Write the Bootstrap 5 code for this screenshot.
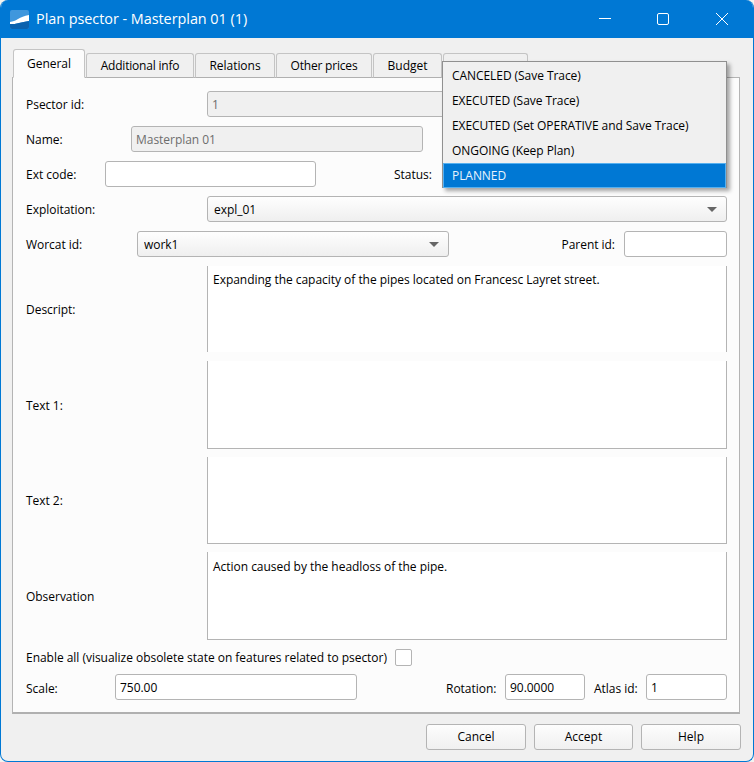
<!DOCTYPE html>
<html lang="en">
<head>
    <meta charset="UTF-8">
    <title>Plan psector - Masterplan 01 (1)</title>
    <link href="https://cdn.jsdelivr.net/npm/bootstrap@5.3.0/dist/css/bootstrap.min.css" rel="stylesheet">
    <style>
        html, body { height: 100%; }
        body { background: #f4f4f0; font-family: "Open Sans", "Liberation Sans", sans-serif; font-size: 12px; letter-spacing: -.03px; color: #000; overflow: hidden; }
        .win { width: 754px; height: 762px; background: #f0f0f0; border: 1px solid #0078d4; border-top: 0; border-radius: 8px; overflow: hidden; }
        .win-title { height: 38px; background: #0078d4; color: #fff; font-size: 14.4px; padding-left: 9px; }
        .win-title svg { display: block; }
        .win-ctl { height: 38px; }
        .ctl-min { width: 58px; }
        .ctl-max { width: 58px; }
        .ctl-close { width: 60px; }
        .win-ctls { padding-right: 1px; }
        .win-name { margin-left: 7px; }

        .tabs-wrap { margin: 11px 13px 0 11px; position: relative; }
        .nav-tabs.qt-tabs { border-bottom: 0; margin-left: 1px; gap: 1px; align-items: flex-end; position: relative; z-index: 1; margin-bottom: -1px; }
        .qt-tabs .nav-link { height: 25px; margin: 0; padding: 0; border: 1px solid #c4c4c4; border-bottom: 1px solid #b0b0b0; border-radius: 3px 3px 0 0; background: #f0f0f0; color: #000; display: flex; align-items: center; justify-content: center; }
        .qt-tabs .nav-link.active { height: 29px; padding-top: 1px; background: #fcfcfc; color: #000; border-color: #c4c4c4 #c4c4c4 #fcfcfc; }
        .tab-gen { width: 72px; }
        .qt-tabs .tab-add { width: 108px; letter-spacing: -.2px; }
        .tab-rel { width: 80px; }
        .qt-tabs .tab-pri { width: 96px; letter-spacing: -.2px; }
        .tab-bud { width: 69px; }
        .tab-hid { width: 85px; }

        .pane { height: 637px; background: #fcfcfc; border: 1px solid #b4b4b4; border-bottom: 2px solid #b0b0b0; padding: 13px 12px 0 13px; gap: 8px; }
        .fld-row { height: 27px; }
        .fld-row .form-control, .fld-row .form-select { height: 26px; align-self: flex-start; font-size: 12px; letter-spacing: -.03px; color: #000; border: 1px solid #b4b4b4; border-radius: 3px; box-shadow: none; padding: 1px 4px 0; min-height: 0; }
        .fld-row .form-control { background-color: #fff; }
        .fld-row .form-control:disabled { background-color: #f0f0f0; color: #6d6d6d; opacity: 1; }
        .fld-row .form-select { padding: 1px 24px 0 6px; background-color: #f4f4f4; background-image: url("data:image/svg+xml,%3csvg xmlns='http://www.w3.org/2000/svg' width='10' height='5'%3e%3cpath fill='%23666' d='M0 0h10L5 5z'/%3e%3c/svg%3e"), linear-gradient(#fefefe, #efefef); background-repeat: no-repeat; background-position: right 9px center, 0 0; background-size: 10px 5px, 100% 100%; }

        .lbl-79 { width: 79px; }
        .lbl-89 { width: 89px; }
        .lbl-105 { width: 105px; }
        .lbl-111 { width: 111px; }
        .lbl-181 { width: 181px; }
        .fld-211 { width: 211px; }
        .fld-292 { width: 292px; }
        .fld-312 { width: 312px; }
        .fld-103 { width: 103px; }
        .fld-242 { width: 242px; }
        .fld-80 { width: 80px; }
        .fld-81 { width: 81px; }
        .status-lbl { margin-left: 78px; width: 50px; }
        .rot-lbl { margin-left: 89px; width: 59px; }
        .atlas-lbl { margin-left: 9px; width: 52px; }
        .parent-lbl { margin-right: 9px; }

        .memo-row { height: 87px; }
        .memo-row.memo-tall { height: 88px; }
        .memo-tall label, .chk-row label, .scale-row label { padding-top: 2px; }
        .memo { flex: 1; height: 100%; background: #fff; border-left: 1px solid #b4b4b4; border-right: 1px solid #b4b4b4; border-bottom: 1px solid #b4b4b4; padding: 5px 5px; line-height: 18px; }
        .memo-first { height: 86px; border-bottom: 0; align-self: flex-start; }
        .memo-last { padding-top: 6px; }

        .chk-row { height: 18px; }
        .form-check-input.qt-check { width: 17px; height: 17px; margin: 0 0 0 8px; border: 1px solid #b4b4b4; border-radius: 2px; box-shadow: none; flex: none; }

        .foot { padding-top: 10px; padding-right: 12px; gap: 8px; }
        .foot .btn { width: 100px; height: 26px; padding: 0; font-size: 12px; color: #000; border: 1px solid #b4b4b4; border-radius: 3px; background: linear-gradient(#fdfdfd, #f0f0f0); }
        .foot .btn.btn-mid { width: 99px; }

        .status-pop.dropdown-menu { display: block; top: 12px; left: 430px; width: 285px; height: 127px; padding: 1px 0; margin: 0; background: #f0f0f0; border: 1px solid #909090; border-radius: 0; box-shadow: 3px 3px 4px rgba(0,0,0,.35); z-index: 5; font-size: 12px; letter-spacing: -.06px; }
        .status-pop .dropdown-item { height: 25px; padding: 0 9px; display: flex; align-items: center; color: #000; }
        .status-pop .dropdown-item.active { background: #0078d4; color: #e8f3fc; border: 1px solid #55b0f0; padding: 0 8px; }
    </style>
</head>
<body>
<div class="win d-flex flex-column">
    <div class="win-title d-flex align-items-center">
        <svg width="19" height="19" viewBox="0 0 19 19">
            <rect width="19" height="19" rx="2" fill="#3f97dd"/>
            <path d="M0 12c3-1 5-1 8-3s6-3 11-4v6c-4 1-7 1-10 2s-6 1-9 1z" fill="#fff"/>
            <path d="M0 14c3 0 6 0 9-1s6-1 10-2v6a2 2 0 0 1-2 2H2a2 2 0 0 1-2-2z" fill="#0b62ae"/>
        </svg>
        <span class="win-name">Plan psector - Masterplan 01 (1)</span>
        <div class="win-ctls d-flex ms-auto">
            <div class="win-ctl ctl-min d-flex align-items-center justify-content-center">
                <svg width="12" height="12" viewBox="0 0 12 12"><path d="M0 5.5h12" stroke="#fff" fill="none"/></svg>
            </div>
            <div class="win-ctl ctl-max d-flex align-items-center justify-content-center">
                <svg width="12" height="12" viewBox="0 0 12 12"><rect x=".5" y=".5" width="11" height="11" rx="1.5" stroke="#fff" fill="none"/></svg>
            </div>
            <div class="win-ctl ctl-close d-flex align-items-center justify-content-center">
                <svg width="12" height="12" viewBox="0 0 12 12"><path d="M0 0l12 12M12 0L0 12" stroke="#fff" fill="none"/></svg>
            </div>
        </div>
    </div>

    <div class="tabs-wrap">
        <ul class="nav nav-tabs qt-tabs">
            <li class="nav-item"><a class="nav-link active tab-gen" href="#">General</a></li>
            <li class="nav-item"><a class="nav-link tab-add" href="#">Additional info</a></li>
            <li class="nav-item"><a class="nav-link tab-rel" href="#">Relations</a></li>
            <li class="nav-item"><a class="nav-link tab-pri" href="#">Other prices</a></li>
            <li class="nav-item"><a class="nav-link tab-bud" href="#">Budget</a></li>
            <li class="nav-item"><a class="nav-link tab-hid" href="#"></a></li>
        </ul>

        <div class="pane d-flex flex-column">
            <div class="fld-row d-flex align-items-center">
                <label class="lbl-181 flex-shrink-0">Psector id:</label>
                <input class="form-control flex-grow-1" value="1" disabled>
            </div>
            <div class="fld-row d-flex align-items-center">
                <label class="lbl-105 flex-shrink-0">Name:</label>
                <input class="form-control fld-292" value="Masterplan 01" disabled>
            </div>
            <div class="fld-row d-flex align-items-center">
                <label class="lbl-79 flex-shrink-0">Ext code:</label>
                <input class="form-control fld-211">
                <label class="status-lbl flex-shrink-0">Status:</label>
                <select class="form-select flex-grow-1 w-auto"><option>PLANNED</option></select>
            </div>
            <div class="fld-row d-flex align-items-center">
                <label class="lbl-181 flex-shrink-0">Exploitation:</label>
                <select class="form-select flex-grow-1 w-auto"><option>expl_01</option></select>
            </div>
            <div class="fld-row d-flex align-items-center">
                <label class="lbl-111 flex-shrink-0">Worcat id:</label>
                <select class="form-select fld-312"><option>work1</option></select>
                <label class="parent-lbl ms-auto">Parent id:</label>
                <input class="form-control fld-103">
            </div>
            <div class="memo-row d-flex align-items-center">
                <label class="lbl-181 flex-shrink-0">Descript:</label>
                <div class="memo memo-first">Expanding the capacity of the pipes located on Francesc Layret street.</div>
            </div>
            <div class="memo-row memo-tall d-flex align-items-center">
                <label class="lbl-181 flex-shrink-0">Text 1:</label>
                <div class="memo"></div>
            </div>
            <div class="memo-row d-flex align-items-center">
                <label class="lbl-181 flex-shrink-0">Text 2:</label>
                <div class="memo"></div>
            </div>
            <div class="memo-row memo-tall d-flex align-items-center">
                <label class="lbl-181 flex-shrink-0">Observation</label>
                <div class="memo memo-last">Action caused by the headloss of the pipe.</div>
            </div>
            <div class="chk-row d-flex align-items-center">
                <label>Enable all (visualize obsolete state on features related to psector)</label>
                <input class="form-check-input qt-check" type="checkbox">
            </div>
            <div class="fld-row scale-row d-flex align-items-center">
                <label class="lbl-89 flex-shrink-0">Scale:</label>
                <input class="form-control fld-242" value="750.00">
                <label class="rot-lbl flex-shrink-0">Rotation:</label>
                <input class="form-control fld-80" value="90.0000">
                <label class="atlas-lbl flex-shrink-0">Atlas id:</label>
                <input class="form-control fld-81" value="1">
            </div>
        </div>

        <ul class="dropdown-menu status-pop show list-unstyled">
            <li><a class="dropdown-item" href="#">CANCELED (Save Trace)</a></li>
            <li><a class="dropdown-item" href="#">EXECUTED (Save Trace)</a></li>
            <li><a class="dropdown-item" href="#">EXECUTED (Set OPERATIVE and Save Trace)</a></li>
            <li><a class="dropdown-item" href="#">ONGOING (Keep Plan)</a></li>
            <li><a class="dropdown-item active" href="#">PLANNED</a></li>
        </ul>
    </div>

    <div class="foot d-flex justify-content-end">
        <button class="btn" type="button">Cancel</button>
        <button class="btn btn-mid" type="button">Accept</button>
        <button class="btn" type="button">Help</button>
    </div>
</div>
<script src="https://cdn.jsdelivr.net/npm/bootstrap@5.3.0/dist/js/bootstrap.bundle.min.js"></script>
</body>
</html>
